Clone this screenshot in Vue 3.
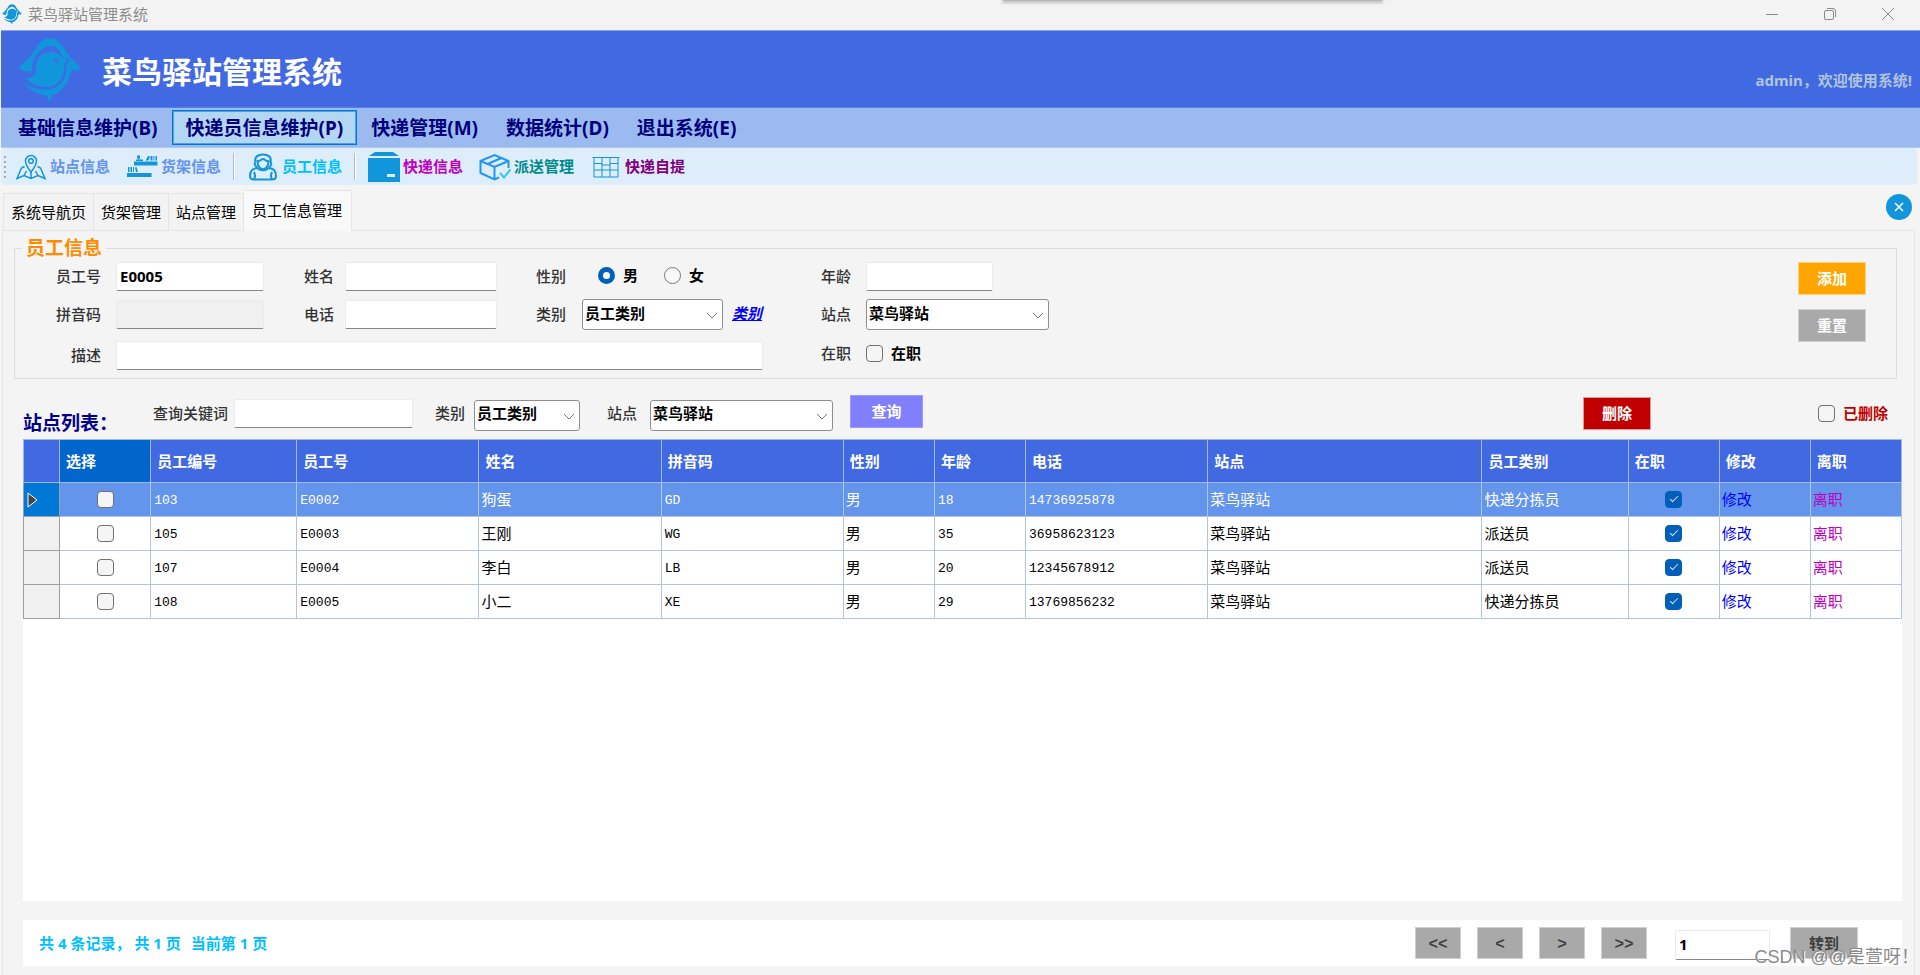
<script setup>
import { ref } from 'vue'

const menus = [
  { label: '基础信息维护(B)' },
  { label: '快递员信息维护(P)', active: true },
  { label: '快递管理(M)' },
  { label: '数据统计(D)' },
  { label: '退出系统(E)' },
]
const tabs = ['系统导航页', '货架管理', '站点管理', '员工信息管理']
const columns = [
  { title: '', cls: 'c-head' },
  { title: '选择', cls: 'c-s current' },
  { title: '员工编号', cls: 'c-m' },
  { title: '员工号', cls: 'c-l' },
  { title: '姓名', cls: 'c-l' },
  { title: '拼音码', cls: 'c-l' },
  { title: '性别', cls: 'c-s' },
  { title: '年龄', cls: 'c-s' },
  { title: '电话', cls: 'c-l' },
  { title: '站点', cls: 'c-xl' },
  { title: '员工类别', cls: 'c-m' },
  { title: '在职', cls: 'c-s' },
  { title: '修改', cls: 'c-s' },
  { title: '离职', cls: 'c-s' },
]
const rows = ref([
  { id: '103', no: 'E0002', name: '狗蛋', py: 'GD', sex: '男', age: '18', tel: '14736925878', site: '菜鸟驿站', type: '快递分拣员', picked: false, onJob: true },
  { id: '105', no: 'E0003', name: '王刚', py: 'WG', sex: '男', age: '35', tel: '36958623123', site: '菜鸟驿站', type: '派送员', picked: false, onJob: true },
  { id: '107', no: 'E0004', name: '李白', py: 'LB', sex: '男', age: '20', tel: '12345678912', site: '菜鸟驿站', type: '派送员', picked: false, onJob: true },
  { id: '108', no: 'E0005', name: '小二', py: 'XE', sex: '男', age: '29', tel: '13769856232', site: '菜鸟驿站', type: '快递分拣员', picked: false, onJob: true },
])
const sex = ref('男')
const empNo = ref('E0005')
const page = ref('1')
const birdRoof = 'M1 30 C7 26 12 20 18 11 C22 5 26 1 32 1 C38 1 42 5 46 11 C51 18 56 26 63 30 C62 33 60 34 56 33 C54 33 53 34 52 36 C51 46 43 56 34 58 C34 60 33 62 31 64 C30 61 29 59 27 58 C18 57 9 51 6 46 C15 52 30 56 40 49 C48 43 49 34 48 28 L52 23 L45 21 C42 12 37 9 32 9 C24 10 18 17 15 24 L14 33 L11 38 C11 36 12 34 10 34 C6 34 2 34 1 30 Z'
const birdBody = 'M18 32 C17 22 23 15 33 15 C38 15 42 17 44 21 L50 23 L46 27 C47 36 44 45 35 49 C26 52 13 48 7 41 C14 42 18 38 18 32 Z'
</script>

<template>
  <div class="app">
    <div class="snap-hint"></div>
    <header class="titlebar">
      <svg class="mini-logo" viewBox="0 0 64 64"><path :d="birdRoof" /><path :d="birdBody" /></svg>
      <span class="win-title">菜鸟驿站管理系统</span>
      <div class="win-buttons">
        <button aria-label="最小化"><svg viewBox="0 0 12 12"><path d="M0 6.500H12" /></svg></button>
        <button aria-label="还原"><svg viewBox="0 0 12 12"><rect x="0.500" y="2.500" width="9" height="9" rx="1.500" /><path d="M3 .5H9Q11.500 .5 11.500 3V9" /></svg></button>
        <button aria-label="关闭"><svg viewBox="0 0 12 12"><path d="M0 0L12 12M12 0L0 12" /></svg></button>
      </div>
    </header>

    <div class="banner">
      <svg class="logo" viewBox="0 0 64 64">
        <path :d="birdRoof" /><path :d="birdBody" /><circle class="eye" cx="38" cy="24" r="2" />
      </svg>
      <h1>菜鸟驿站管理系统</h1>
      <span class="welcome">admin，欢迎使用系统!</span>
    </div>

    <nav class="menu">
      <button v-for="m in menus" :key="m.label" :class="{ active: m.active }">{{ m.label }}</button>
    </nav>

    <div class="toolbar">
      <span class="grip"><i></i><i></i><i></i><i></i><i></i></span>
      <button class="t-blue">
        <svg viewBox="0 0 32 28" class="line">
          <path d="M16 19C12 14 10.500 11 10.500 8A5.500 5.500 0 0 1 21.500 8C21.500 11 20 14 16 19Z" /><circle cx="16" cy="8" r="2.300" />
          <path d="M9.500 13.500L6.500 15L2 25.500L9 22.500L16 25.500L23 22.500L30 25.500L25.500 15L22.500 13.500M16 19V25.500M9 22.500L11.500 18M23 22.500L20.500 18" />
        </svg>
        <span>站点信息</span>
      </button>
      <button class="t-blue">
        <svg viewBox="0 0 32 28" class="fill">
          <path d="M8 8.500H31.500V12.500H8ZM1 20H25.500V24H1Z" />
          <path d="M10 8V6.500H12.500V5.500H11V2.500H14V5.500H13.500V6.500H17V8ZM19.500 7.500L22 3L24 3.500L22.500 7.500ZM24.500 3H26.500V7.500H24.500ZM27.500 3H28.500V7.500H27.500ZM29.500 3H31V7.500H29.500ZM2 14H3.500V19H2ZM4.500 14H6V19H4.500ZM7 14H8V19H7ZM9 14.500L10.500 14L12 19H10Z" />
        </svg>
        <span>货架信息</span>
      </button>
      <span class="sep"></span>
      <button class="t-sky">
        <svg viewBox="0 0 32 28" class="line thick">
          <path d="M8.500 9C7 4 11 1.500 16 1.500S25 4 23.500 9C25.500 11 23 14 21.500 14M8.500 9C6.500 11 9 14 10.500 14" />
          <path d="M10.500 8C10.500 19 21.500 19 21.500 8C19 9 18 6 16 6S13 9 10.500 8Z" />
          <path d="M11 15C5 15 3 19 3 23Q3 26.500 7 26.500H25Q29 26.500 29 23C29 19 27 15 21 15M11 15C12 18 20 18 21 15M7 19Q9 23 7 26.500M25 19Q23 23 25 26.500" />
        </svg>
        <span>员工信息</span>
      </button>
      <span class="sep"></span>
      <button class="t-magenta">
        <svg viewBox="0 0 32 32" class="fill tall"><path d="M1 5L7 1H25L31 5ZM0 7H32V31H0ZM19 23V26H27V23Z" fill-rule="evenodd" /></svg>
        <span>快递信息</span>
      </button>
      <button class="t-teal">
        <svg viewBox="0 0 32 28" class="line box">
          <path d="M29.500 15V8L15.500 2L1.500 8V20L15.500 26.500L20 24.500M1.500 8L15.500 14L29.500 8M15.500 14V26.500M22.500 5L8.500 11" /><path class="tick" d="M21 20L25 24.500L31.500 16.500" />
        </svg>
        <span>派送管理</span>
      </button>
      <button class="t-purple">
        <svg viewBox="0 0 32 28" class="line thin"><path d="M2.500 4.500H29.500M4 4.500V24H28V4.500M12 4.500V24M20 4.500V24M4 10.500H12M20 10.500H28M4 17H28M12 12H20" /></svg>
        <span>快递自提</span>
      </button>
    </div>

    <div class="tabs" role="tablist">
      <button v-for="(t, i) in tabs" :key="t" role="tab" :class="{ active: i === 3 }">{{ t }}</button>
      <button class="close-tab" aria-label="关闭当前页"><svg viewBox="0 0 26 26"><circle cx="13" cy="13" r="13" /><path d="M9 9L17 17M17 9L9 17" /></svg></button>
    </div>

    <main class="page">
      <fieldset>
        <legend>员工信息</legend>
        <div class="form">
          <label for="no" class="first">员工号</label>
          <input id="no" v-model="empNo" class="w-m" type="text">
          <label for="name">姓名</label>
          <input id="name" class="w-n" type="text">
          <span class="lbl">性别</span>
          <div class="radios">
            <label><input v-model="sex" type="radio" name="sex" value="男">男</label>
            <label><input v-model="sex" type="radio" name="sex" value="女">女</label>
          </div>
          <label for="age">年龄</label>
          <input id="age" class="w-s" type="text">

          <label for="py" class="first">拼音码</label>
          <input id="py" class="w-m" type="text" disabled>
          <label for="tel">电话</label>
          <input id="tel" class="w-n" type="text">
          <label for="type">类别</label>
          <div class="with-link">
            <span class="select w-type"><select id="type"><option>员工类别</option></select><svg viewBox="0 0 12 8"><path d="M1 1L6 6L11 1" /></svg></span>
            <a href="#">类别</a>
          </div>
          <label for="site">站点</label>
          <span class="select w-site"><select id="site"><option>菜鸟驿站</option></select><svg viewBox="0 0 12 8"><path d="M1 1L6 6L11 1" /></svg></span>

          <label for="desc" class="first low">描述</label>
          <input id="desc" class="low desc" type="text">
          <span class="lbl">在职</span>
          <label class="check"><input type="checkbox">在职</label>
        </div>
        <div class="form-actions">
          <button class="btn orange">添加</button>
          <button class="btn gray">重置</button>
        </div>
      </fieldset>

      <div class="search">
        <h2>站点列表：</h2>
        <label for="kw">查询关键词</label>
        <input id="kw" type="text">
        <label for="qtype" class="l-type">类别</label>
        <span class="select w-qtype"><select id="qtype"><option>员工类别</option></select><svg viewBox="0 0 12 8"><path d="M1 1L6 6L11 1" /></svg></span>
        <label for="qsite" class="l-site">站点</label>
        <span class="select w-site"><select id="qsite"><option>菜鸟驿站</option></select><svg viewBox="0 0 12 8"><path d="M1 1L6 6L11 1" /></svg></span>
        <button class="btn violet">查询</button>
        <button class="btn red">删除</button>
        <label class="check deleted"><input type="checkbox">已删除</label>
      </div>

      <div class="grid">
        <table>
          <thead>
            <tr><th v-for="(c, i) in columns" :key="i" :class="c.cls">{{ c.title }}</th></tr>
          </thead>
          <tbody>
            <tr v-for="(r, i) in rows" :key="r.id" :class="{ selected: i === 0 }">
              <td class="row-head"><svg v-if="i === 0" viewBox="0 0 12 16"><path d="M1 1L10 8L1 15Z" /></svg></td>
              <td class="mid"><input v-model="r.picked" type="checkbox" :aria-label="'选择 ' + r.no"></td>
              <td class="mono">{{ r.id }}</td>
              <td class="mono">{{ r.no }}</td>
              <td>{{ r.name }}</td>
              <td class="mono">{{ r.py }}</td>
              <td>{{ r.sex }}</td>
              <td class="mono">{{ r.age }}</td>
              <td class="mono">{{ r.tel }}</td>
              <td>{{ r.site }}</td>
              <td>{{ r.type }}</td>
              <td class="mid"><input v-model="r.onJob" type="checkbox" :aria-label="'在职 ' + r.no"></td>
              <td><a href="#" class="edit">修改</a></td>
              <td><a href="#" class="leave">离职</a></td>
            </tr>
          </tbody>
        </table>
      </div>

      <footer class="pager">
        <div class="summary"><span>共 4 条记录，</span><span>共 1 页</span><span>当前第 1 页</span></div>
        <button class="nav">&lt;&lt;</button>
        <button class="nav">&lt;</button>
        <button class="nav">&gt;</button>
        <button class="nav">&gt;&gt;</button>
        <input v-model="page" type="text" aria-label="页码">
        <button class="go">转到</button>
      </footer>
    </main>
    <span class="watermark">CSDN @@是萱呀！</span>
  </div>
</template>

<style>
body { margin: 0; background: #f4f4f4; }
</style>

<style scoped>
.app {
  position: relative;
  display: flex;
  flex-direction: column;
  min-height: 100vh;
  background: #f4f4f4;
  font-family: "Noto Sans", "Noto Sans CJK SC", sans-serif;
  font-size: 15px;
  line-height: 22px;
  color: #000;
}
.app *, .app *::before { box-sizing: border-box; }
button, input, select { font: inherit; color: inherit; margin: 0; }
button { border: 0; background: none; padding: 0; white-space: nowrap; }
.snap-hint {
  position: absolute; top: 0; left: 1003px; width: 379px; height: 1px;
  background: #b4b4b4; box-shadow: 0 1px 3px 1px #bcbcbc;
}

.titlebar { display: flex; align-items: center; height: 30px; padding: 0 26px 3px 2px; background: #f3f3f3; color: #8c8c8c; }
.mini-logo { width: 20px; height: 20px; fill: #1296db; margin-right: 6px; }
.win-buttons { display: flex; gap: 46px; margin-left: auto; }
.win-buttons button { width: 12px; height: 12px; display: flex; }
.win-buttons svg { width: 12px; height: 12px; fill: none; stroke: #8a8a8a; }

.banner { display: flex; align-items: center; height: 78px; margin-left: 1px; padding: 0 8px 0 17px; background: #4169e1; border-top: 1px solid #8ba4ef; border-bottom: 1px solid #5b7fe9; }
.logo { width: 64px; height: 64px; fill: #1296db; }
.logo .eye { fill: #4169e1; }
h1 { margin: 5px 0 0 20px; font-size: 30px; line-height: 40px; color: #fff; }
.welcome { align-self: flex-end; margin: 0 0 16px auto; font-weight: 700; color: #b0c4de; }

.menu { display: flex; align-items: center; height: 40px; margin-left: 1px; padding-left: 3px; background: #9bbaf0; border-bottom: 1px solid #adc6f5; }
.menu button { height: 35px; padding: 0 13px; border: 1px solid transparent; font-size: 19px; line-height: 26px; font-weight: 700; color: #00007c; }
.menu .active { background: #b3d7f3; border: 1px solid #0078d7; box-shadow: inset 0 0 0 1px #4ba2e5; }

.toolbar { display: flex; align-items: center; height: 37px; margin: 0 3px 0 1px; padding-left: 3px; background: #deedfa; border-radius: 4px; }
.grip { display: flex; flex-direction: column; gap: 3px; width: 3px; }
.grip i { width: 2px; height: 2px; background: #a9a9a9; }
.toolbar button { display: flex; align-items: center; gap: 3px; height: 32px; padding: 0 8px; font-weight: 700; }
.toolbar button span { padding-bottom: 1px; }
.toolbar svg { width: 32px; height: 28px; }
.toolbar svg.tall { height: 32px; }
.toolbar .line { fill: none; stroke: #1296db; stroke-width: 1.500; }
.toolbar .thick { stroke-width: 2; }
.toolbar .thin { stroke-width: 1; }
.toolbar .box { stroke: #2196f3; stroke-width: 2; }
.toolbar .tick { stroke: #35c8f0; }
.toolbar .fill { fill: #1296db; }
.sep { width: 2px; height: 27px; margin: 0 4px; background: #b8b8b8; border-right: 1px solid #fff; }
.t-blue { color: #6495ed; }
.t-sky { color: #00bfff; }
.t-magenta { color: #c000c0; }
.t-teal { color: #008b8b; }
.t-purple { color: #800080; }

.tabs { display: flex; align-items: flex-end; height: 45px; padding: 5px 8px 0 3px; }
.tabs button { height: 37px; padding: 0 7px; border: 1px solid #e5e5e5; border-bottom: 0; border-left-width: 0; background: #f3f3f3; }
.tabs button:first-child { border-left-width: 1px; }
.tabs .active { position: relative; height: 41px; padding: 0 9px 2px 8px; margin-bottom: -1px; background: #f9f9f9; }
.tabs .close-tab { width: 26px; height: 26px; margin: 0 0 10px auto; padding: 0; border: 0; background: none; }
.close-tab svg { display: block; width: 26px; height: 26px; fill: #1296db; }
.close-tab path { stroke: #fff; stroke-width: 1.500; }

.page { flex: 1; display: flex; flex-direction: column; margin: 0 5px 0 2px; padding: 5px 12px 9px 20px; border: 1px solid #e5e5e5; border-bottom: 0; }
fieldset { display: flex; margin: 0 5px 0 -9px; padding: 1px 30px 8px 0; border: 1px solid #dcdcdc; min-width: 0; }
legend { margin-left: 7px; padding: 0 4px; font-size: 19px; line-height: 25px; font-weight: 700; color: #ff8c00; }
.form { display: grid; grid-template-columns: 101px 188px 41px 191px 46px 239px 45px 182px; grid-template-rows: 29px 31px 32px; row-gap: 8px; align-items: center; font-weight: 700; }
.form > label, .lbl { padding-bottom: 2px; font-weight: 500; color: #333; }
.form > .first { padding-right: 15px; text-align: right; }
.form > .low { align-self: end; }
.form > label.low { padding-bottom: 4px; }
input[type="text"] { height: 29px; padding: 0 3px 2px; border: 1px solid #ebebeb; border-bottom: 1px solid #868686; border-radius: 2px; background: #fff; font-weight: 700; outline: 0; min-width: 0; }
input[type="text"]:disabled { background: #f0f0f0; }
.w-m { width: 148px; }
.w-n { width: 152px; }
.w-s { width: 127px; }
.w-type { width: 141px; }
.w-site { width: 183px; }
.w-qtype { width: 106px; }
.form .desc { grid-column: 2 / 7; width: 647px; }
.radios { display: flex; gap: 26px; padding: 0 0 3px 16px; }
.radios label, .check { display: flex; align-items: center; gap: 8px; font-weight: 700; color: #000; }
.form > .check { font-weight: 700; color: #000; }
input[type="radio"] { appearance: none; width: 17px; height: 17px; border: 1px solid #767676; border-radius: 50%; background: #f8f8f8; }
input[type="radio"]:checked { border: 5px solid #005fb8; background: #fff; }
input[type="checkbox"] { appearance: none; display: inline-block; position: relative; width: 17px; height: 17px; border: 1px solid #707070; border-radius: 4px; background: #f5f5f5; vertical-align: middle; }
input[type="checkbox"]:checked { border-color: #005fb8; background: #005fb8; }
input[type="checkbox"]:checked::before { content: ""; position: absolute; left: 4px; top: 4px; width: 8px; height: 4px; border: solid #d6e6f5; border-width: 0 0 1px 1px; transform: rotate(-45deg); }
.with-link { display: flex; align-items: center; gap: 9px; }
.with-link a { padding-bottom: 3px; font-style: italic; color: #00f; }
.select { position: relative; display: block; height: 31px; }
.select select { appearance: none; display: block; width: 100%; height: 100%; padding: 0 20px 4px 2px; border: 1px solid #8f8f8f; border-radius: 3px; background: #fff; font-weight: 700; }
.select svg { position: absolute; right: 5px; top: 13px; width: 12px; height: 8px; fill: none; stroke: #777; pointer-events: none; }

.form-actions { display: flex; flex-direction: column; gap: 14px; margin-left: auto; }
.btn { width: 68px; height: 33px; padding-bottom: 1px; border: 1px solid; font-weight: 700; color: #fff; }
.orange { background: #ffa500; border-color: #ffd27f; }
.gray { background: #a9a9a9; border-color: #cfcfcf; }
.violet { width: 73px; margin: 0 0 4px 17px; background: #8080ff; border-color: #9a9aff; }
.red { margin-left: auto; background: #c00000; border-color: #e59a9a; }

.search { display: flex; align-items: center; height: 52px; margin-top: 8px; padding-right: 14px; }
.search > label { color: #333; font-weight: 500; }
h2 { align-self: flex-end; width: 130px; margin: 0; font-size: 19px; line-height: 32px; color: #00008b; white-space: nowrap; }
.search > input { width: 179px; margin-left: 6px; }
.search .l-type { margin: 0 9px 0 22px; }
.search .l-site { margin: 0 13px 0 27px; }
.search .select { margin-top: 4px; }
.search .deleted { margin-left: 167px; color: #c00000; font-weight: 700; }

.grid { flex: 1; background: #fff; }
table { width: 100%; border-collapse: collapse; table-layout: fixed; }
th { height: 43px; padding: 0 6px; border: 1px solid #9fb8e4; background: #4169e1; color: #fff; text-align: left; font-weight: 700; }
th.current { background: #0066cc; }
.c-head { width: 36px; }
.c-s { width: 91px; }
.c-m { width: 146px; }
.c-l { width: 182px; }
.c-xl { width: 274px; }
td { height: 34px; padding: 0 2px 2px; border: 1px solid #b0c4de; white-space: nowrap; }
tbody tr { height: 34px; }
td.mono { padding: 2px 3px 0; font: 13px "Liberation Mono", monospace; }
td.mid { text-align: center; line-height: 17px; }
td.row-head { padding: 0 3px; background: #f0f0f0; border-color: #a0a0a0; }
.selected td { background: #6495ed; color: #fff; }
.selected td.row-head { background: #0078d7; }
.row-head svg { display: block; width: 12px; height: 16px; fill: #444; stroke: #fff; }
td a { text-decoration: none; }
.edit { color: #00f; }
.leave { color: #c000c0; }

.pager { display: flex; align-items: center; height: 46px; margin-top: 19px; padding: 0 44px 0 16px; background: #fff; }
.summary { display: flex; gap: 4px; margin-right: auto; font-weight: 700; color: #00bfff; }
.summary span:last-child { margin-left: 6px; }
.nav, .go { width: 46px; height: 32px; margin: 0 16px 0 0; background: #a9a9a9; border: 1px solid #d0d0d0; color: #404040; font-weight: 700; }
.nav { padding-top: 3px; font-family: "Liberation Mono", monospace; font-size: 16px; }
.go { width: 68px; margin: 0; }
.pager input { width: 95px; height: 30px; margin: 4px 20px 0 12px; }
.watermark { position: absolute; right: 1px; bottom: 5px; font: 18px/26px "Liberation Sans", "Noto Sans CJK SC", sans-serif; color: #8a8a8a; text-shadow: 1px 1px 0 #fff; }
</style>
